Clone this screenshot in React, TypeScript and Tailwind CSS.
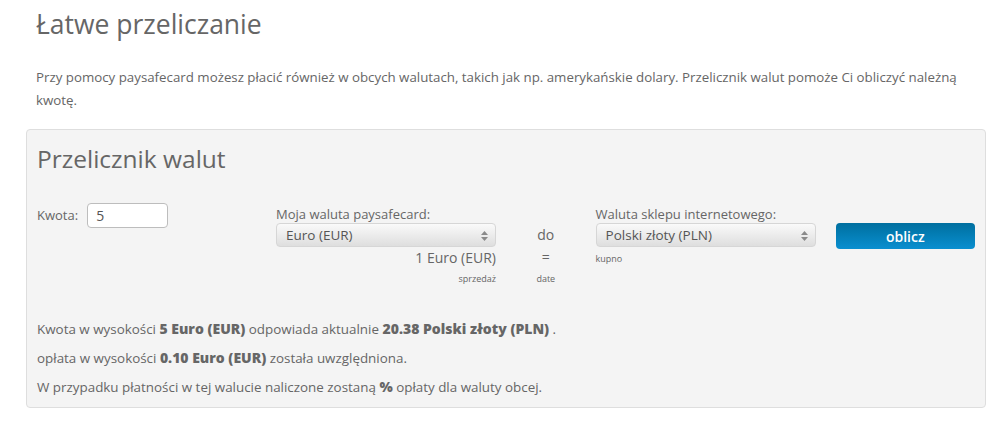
import React from "react";

function SelectBox({ value }: { value: string }) {
  return (
    <div className="relative flex h-[24px] w-[220px] items-center rounded-[4px] border border-[#d6d6d6] bg-gradient-to-b from-[#fafafa] to-[#dedede] pl-[9px] text-[13.5px] text-[#555]">
      {value}
      <svg className="absolute right-[7px] top-[7px]" width="7" height="10" viewBox="0 0 7 10">
        <path d="M3.5 0 L7 4 L0 4 Z" fill="#8a8a8a" />
        <path d="M0 6 L7 6 L3.5 10 Z" fill="#8a8a8a" />
      </svg>
    </div>
  );
}

export default function App() {
  return (
    <div
      className="h-[432px] w-[1004px] bg-white text-[#666]"
      style={{ fontFamily: '"Open Sans", "Liberation Sans", sans-serif' }}
    >
      <div className="px-[36px] pt-[6px]">
        <h1 className="text-[26.5px] leading-[36px] text-[#666]">Łatwe przeliczanie</h1>
        <p className="mt-[24px] text-[13.3px] leading-[23px]">
          Przy pomocy paysafecard możesz płacić również w obcych walutach, takich jak np. amerykańskie dolary. Przelicznik walut pomoże Ci obliczyć należną kwotę.
        </p>
      </div>

      <div className="ml-[26px] mt-[17px] w-[960px] rounded-[4px] border border-[#dedede] bg-[#f4f4f4] px-[10px] pb-[10px] pt-[14px]">
        <h2 className="text-[24.5px] leading-[30px] text-[#666]">Przelicznik walut</h2>

        <div className="mt-[29px] flex items-start text-[13px]">
          <div className="flex w-[240px] items-center gap-[9px]">
            <span>Kwota:</span>
            <div className="flex h-[25px] w-[81px] items-center rounded-[4px] border border-[#bdbdbd] bg-white px-[8px] text-[14px] text-[#555]">
              5
            </div>
          </div>

          <div className="mt-[2px] flex w-[220px] flex-col">
            <span className="leading-[18px]">Moja waluta paysafecard:</span>
            <SelectBox value="Euro (EUR)" />
            <span className="mt-[1px] text-right text-[14px] leading-[20px]">1 Euro (EUR)</span>
            <span className="mt-[5px] text-right text-[9px] leading-[12px]">sprzedaż</span>
          </div>

          <div className="mt-[22px] flex w-[100px] flex-col items-center text-[14px]">
            <span className="leading-[20px]">do</span>
            <span className="leading-[24px]">=</span>
            <span className="mt-[4px] text-[9px] leading-[12px]">date</span>
          </div>

          <div className="mt-[2px] flex w-[220px] flex-col">
            <span className="leading-[18px]">Waluta sklepu internetowego:</span>
            <SelectBox value="Polski złoty (PLN)" />
            <span className="mt-[6px] text-[9px] leading-[12px]">kupno</span>
          </div>

          <button className="ml-[20px] mt-[20px] h-[26px] w-[140px] rounded-[4px] bg-gradient-to-b from-[#006f9f] to-[#0a8fd0] text-[14px] font-semibold text-white">
            oblicz
          </button>
        </div>

        <div className="mt-[34px] flex flex-col gap-[9px] text-[13.4px] leading-[20px]">
          <p>
            Kwota w wysokości <b className="text-[14px] font-extrabold">5 Euro (EUR)</b> odpowiada aktualnie{" "}
            <b className="text-[14px] font-extrabold">20.38 Polski złoty (PLN)</b> .
          </p>
          <p>
            opłata w wysokości <b className="text-[14px] font-extrabold">0.10 Euro (EUR)</b> została uwzględniona.
          </p>
          <p>
            W przypadku płatności w tej walucie naliczone zostaną <b className="text-[14px] font-extrabold">%</b> opłaty dla waluty obcej.
          </p>
        </div>
      </div>
    </div>
  );
}
